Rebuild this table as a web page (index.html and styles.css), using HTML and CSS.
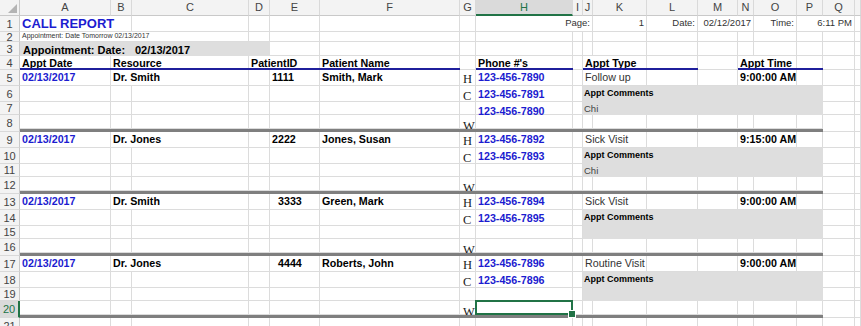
FILE: index.html
```html
<!DOCTYPE html>
<html lang="en">
<head>
<meta charset="utf-8">
<title>Call Report</title>
<link rel="stylesheet" href="styles.css">
</head>
<body>
<div class="sheet">
<div class="corner"><svg width="19" height="15" viewBox="0 0 19 15"><polygon points="17,4 17,13 8,13" fill="#b4b4b4"/></svg></div>
<div class="ch">A</div><div class="ch">B</div><div class="ch">C</div><div class="ch">D</div><div class="ch">E</div><div class="ch">F</div><div class="ch">G</div><div class="ch hsel">H</div><div class="ch">I</div><div class="ch">J</div><div class="ch">K</div><div class="ch">L</div><div class="ch">M</div><div class="ch">N</div><div class="ch">O</div><div class="ch">P</div><div class="ch">Q</div><div class="ch"></div>

<div class="rh">1</div>
<div class="c s2 title">CALL REPORT</div>
<div class="c"></div><div class="c"></div><div class="c"></div><div class="c"></div><div class="c"></div>
<div class="c s3 rt meta">Page:</div>
<div class="c rt meta">1</div>
<div class="c rt meta">Date:</div>
<div class="c s2 rt meta">02/12/2017</div>
<div class="c rt meta">Time:</div>
<div class="c s2 rt meta">6:11 PM</div>
<div class="c"></div>

<div class="rh">2</div>
<div class="c s3 tiny">Appointment: Date Tomorrow 02/13/2017</div>
<div class="c"></div><div class="c"></div><div class="c"></div><div class="c"></div><div class="c"></div><div class="c"></div><div class="c"></div><div class="c"></div><div class="c"></div><div class="c"></div><div class="c"></div><div class="c"></div><div class="c"></div><div class="c"></div><div class="c"></div>

<div class="rh">3</div>
<div class="c s4 band"><span>Appointment: Date:</span><span>02/13/2017</span></div>
<div class="c"></div><div class="c"></div><div class="c"></div><div class="c"></div><div class="c"></div><div class="c"></div><div class="c"></div><div class="c"></div><div class="c"></div><div class="c"></div><div class="c"></div><div class="c"></div><div class="c"></div><div class="c"></div>

<div class="rh">4</div>
<div class="c hd ul">Appt Date</div>
<div class="c s2 hd ul">Resource</div>
<div class="c s2 hd ul">PatientID</div>
<div class="c hd ul">Patient Name</div>
<div class="c"></div>
<div class="c hd ul">Phone #'s</div>
<div class="c"></div>
<div class="c s2 hd ul">Appt Type</div>
<div class="c ul"></div>
<div class="c"></div>
<div class="c s2 hd ul">Appt Time</div>
<div class="c ul"></div>
<div class="c"></div>
<div class="c"></div>

<!-- group 1 -->
<div class="rh">5</div>
<div class="c blue">02/13/2017</div>
<div class="c s2">Dr. Smith</div>
<div class="c"></div>
<div class="c pa">1111</div>
<div class="c">Smith, Mark</div>
<div class="c hl l1">H</div>
<div class="c blue">123-456-7890</div>
<div class="c"></div>
<div class="c s2 ty">Follow up</div>
<div class="c"></div><div class="c"></div>
<div class="c s2">9:00:00 AM</div>
<div class="c"></div><div class="c"></div><div class="c"></div>

<div class="rh">6</div>
<div class="c"></div><div class="c"></div><div class="c"></div><div class="c"></div><div class="c"></div><div class="c"></div>
<div class="c hl l2">C</div>
<div class="c blue p2">123-456-7891</div>
<div class="c"></div>
<div class="c s7 fill"><b>Appt Comments</b><span>Chi</span></div>
<div class="c"></div><div class="c"></div>

<div class="rh">7</div>
<div class="c"></div><div class="c"></div><div class="c"></div><div class="c"></div><div class="c"></div><div class="c"></div>
<div class="c"></div>
<div class="c blue p3">123-456-7890</div>
<div class="c"></div>
<div class="c"></div><div class="c"></div>

<div class="rh r2">8</div>
<div class="c"></div><div class="c"></div><div class="c"></div><div class="c"></div><div class="c"></div><div class="c"></div>
<div class="c hl l4">W</div>
<div class="c"></div><div class="c"></div>
<div class="c"></div><div class="c"></div><div class="c"></div><div class="c"></div><div class="c"></div><div class="c"></div><div class="c"></div>
<div class="c r2"></div><div class="c r2"></div>
<div class="sep"></div>

<!-- group 2 -->
<div class="rh">9</div>
<div class="c blue">02/13/2017</div>
<div class="c s2">Dr. Jones</div>
<div class="c"></div>
<div class="c pa">2222</div>
<div class="c">Jones, Susan</div>
<div class="c hl l1">H</div>
<div class="c blue">123-456-7892</div>
<div class="c"></div>
<div class="c s2 ty">Sick Visit</div>
<div class="c"></div><div class="c"></div>
<div class="c s2">9:15:00 AM</div>
<div class="c"></div><div class="c"></div><div class="c"></div>

<div class="rh">10</div>
<div class="c"></div><div class="c"></div><div class="c"></div><div class="c"></div><div class="c"></div><div class="c"></div>
<div class="c hl l2">C</div>
<div class="c blue p2">123-456-7893</div>
<div class="c"></div>
<div class="c s7 fill"><b>Appt Comments</b><span>Chi</span></div>
<div class="c"></div><div class="c"></div>

<div class="rh">11</div>
<div class="c"></div><div class="c"></div><div class="c"></div><div class="c"></div><div class="c"></div><div class="c"></div>
<div class="c"></div><div class="c"></div><div class="c"></div>
<div class="c"></div><div class="c"></div>

<div class="rh r2">12</div>
<div class="c"></div><div class="c"></div><div class="c"></div><div class="c"></div><div class="c"></div><div class="c"></div>
<div class="c hl l4">W</div>
<div class="c"></div><div class="c"></div>
<div class="c"></div><div class="c"></div><div class="c"></div><div class="c"></div><div class="c"></div><div class="c"></div><div class="c"></div>
<div class="c r2"></div><div class="c r2"></div>
<div class="sep"></div>

<!-- group 3 -->
<div class="rh">13</div>
<div class="c blue">02/13/2017</div>
<div class="c s2">Dr. Smith</div>
<div class="c"></div>
<div class="c pb">3333</div>
<div class="c">Green, Mark</div>
<div class="c hl l1">H</div>
<div class="c blue">123-456-7894</div>
<div class="c"></div>
<div class="c s2 ty">Sick Visit</div>
<div class="c"></div><div class="c"></div>
<div class="c s2">9:00:00 AM</div>
<div class="c"></div><div class="c"></div><div class="c"></div>

<div class="rh">14</div>
<div class="c"></div><div class="c"></div><div class="c"></div><div class="c"></div><div class="c"></div><div class="c"></div>
<div class="c hl l2">C</div>
<div class="c blue p2">123-456-7895</div>
<div class="c"></div>
<div class="c s7 fill"><b>Appt Comments</b></div>
<div class="c"></div><div class="c"></div>

<div class="rh">15</div>
<div class="c"></div><div class="c"></div><div class="c"></div><div class="c"></div><div class="c"></div><div class="c"></div>
<div class="c"></div><div class="c"></div><div class="c"></div>
<div class="c"></div><div class="c"></div>

<div class="rh r2">16</div>
<div class="c"></div><div class="c"></div><div class="c"></div><div class="c"></div><div class="c"></div><div class="c"></div>
<div class="c hl l4">W</div>
<div class="c"></div><div class="c"></div>
<div class="c"></div><div class="c"></div><div class="c"></div><div class="c"></div><div class="c"></div><div class="c"></div><div class="c"></div>
<div class="c r2"></div><div class="c r2"></div>
<div class="sep"></div>

<!-- group 4 -->
<div class="rh">17</div>
<div class="c blue">02/13/2017</div>
<div class="c s2">Dr. Jones</div>
<div class="c"></div>
<div class="c pb">4444</div>
<div class="c">Roberts, John</div>
<div class="c hl l1">H</div>
<div class="c blue">123-456-7896</div>
<div class="c"></div>
<div class="c s2 ty">Routine Visit</div>
<div class="c"></div><div class="c"></div>
<div class="c s2">9:00:00 AM</div>
<div class="c"></div><div class="c"></div><div class="c"></div>

<div class="rh">18</div>
<div class="c"></div><div class="c"></div><div class="c"></div><div class="c"></div><div class="c"></div><div class="c"></div>
<div class="c hl l2">C</div>
<div class="c blue p2">123-456-7896</div>
<div class="c"></div>
<div class="c s7 fill"><b>Appt Comments</b></div>
<div class="c"></div><div class="c"></div>

<div class="rh">19</div>
<div class="c"></div><div class="c"></div><div class="c"></div><div class="c"></div><div class="c"></div><div class="c"></div>
<div class="c"></div><div class="c"></div><div class="c"></div>
<div class="c"></div><div class="c"></div>

<div class="rh r2 rsel">20</div>
<div class="c"></div><div class="c"></div><div class="c"></div><div class="c"></div><div class="c"></div><div class="c"></div>
<div class="c hl l4">W</div>
<div class="c sel"></div><div class="c"></div>
<div class="c"></div><div class="c"></div><div class="c"></div><div class="c"></div><div class="c"></div><div class="c"></div><div class="c"></div>
<div class="c r2"></div><div class="c r2"></div>
<div class="sep"></div>

<div class="rh">21</div>
<div class="c"></div><div class="c"></div><div class="c"></div><div class="c"></div><div class="c"></div><div class="c"></div><div class="c"></div><div class="c"></div><div class="c"></div><div class="c"></div><div class="c"></div><div class="c"></div><div class="c"></div><div class="c"></div><div class="c"></div><div class="c"></div><div class="c"></div><div class="c"></div>
</div>
</body>
</html>
```

FILE: styles.css
```css
* { box-sizing: border-box; margin: 0; padding: 0; }
html, body { background: #fff; }
body {
  width: 861px;
  height: 326px;
  overflow: hidden;
  font-family: "Liberation Sans", Arial, sans-serif;
  color: #000;
}

.sheet {
  display: grid;
  grid-template-columns: 20px 91px 21px 117px 21px 50px 140px 16px 97px 10px 10px 54px 51px 40px 16px 43px 26px 32px 1fr;
  grid-template-rows: 16px 16px 10px 14px 14px repeat(4, 16px 16px 13px 14px 3px) 16px;
}

/* Excel chrome */
.corner {
  display: flex;
  background: #f3f3f3;
  border-right: 1px solid #c9c9c9;
  border-bottom: 1px solid #c9c9c9;
}
.ch {
  background: #f3f3f3;
  border-right: 1px solid #d9d9d9;
  border-bottom: 1px solid #c9c9c9;
  font-size: 11px;
  line-height: 15px;
  color: #444;
  text-align: center;
  overflow: hidden;
}
.ch.hsel {
  background: #dadada;
  color: #217346;
  border-bottom: 2px solid #217346;
  line-height: 14px;
}
.rh {
  display: flex;
  align-items: center;
  justify-content: center;
  background: #f3f3f3;
  border-right: 1px solid #c9c9c9;
  border-bottom: 1px solid #d9d9d9;
  font-size: 11px;
  color: #444;
}
.rh.rsel {
  background: #dadada;
  color: #217346;
  border-right: 2px solid #217346;
}

/* cells */
.c {
  display: flex;
  align-items: flex-end;
  min-width: 0;
  padding: 0 2px 2px;
  border-right: 1px solid #dcdcdc;
  border-bottom: 1px solid #dcdcdc;
  white-space: nowrap;
  font-size: 10.7px;
  font-weight: bold;
}
.s2 { grid-column: span 2; }
.s3 { grid-column: span 3; }
.s4 { grid-column: span 4; }
.s7 { grid-column: span 7; }
.r2 { grid-row: span 2; }
.rt { justify-content: flex-end; }

.title { font-size: 13px; color: #1c1cd0; padding-bottom: 0; }
.meta { font-size: 9.5px; font-weight: normal; color: #333; padding-bottom: 3px; }
.tiny { font-size: 7px; font-weight: normal; color: #333; }

.band {
  display: grid;
  grid-template-columns: 112px 1fr;
  align-items: end;
  padding: 0;
  background: #dedede;
  border-color: #dedede;
  font-size: 11px;
  line-height: 10px;
}
.band span { padding-left: 3px; }

.hd { padding-bottom: 0; }
.ul { position: relative; }
.ul::after {
  content: "";
  position: absolute;
  left: 0;
  right: -1px;
  bottom: -1px;
  height: 2px;
  background: #1f1f9c;
}

.blue { color: #1c1cd0; }
.ty { font-weight: normal; color: #333; }
.pa { padding-left: 2px; }
.pb { padding-left: 8px; }
.p2 { padding-bottom: 1px; }
.p3 { padding-bottom: 0; line-height: 6px; }

.hl {
  padding: 0 0 0 3px;
  font-family: "Liberation Serif", "Times New Roman", serif;
  font-size: 12.5px;
  font-weight: normal;
  color: #222;
}
.l1 { line-height: 12px; }
.l2 { line-height: 10px; }
.l4 { line-height: 4px; }

.fill {
  grid-row: span 2;
  flex-direction: column;
  align-items: flex-start;
  justify-content: flex-start;
  padding: 1px 2px 0 1px;
  background: #dedede;
  border-color: #dedede;
}
.fill b { font-size: 9px; line-height: 12px; }
.fill span {
  margin-top: 4px;
  font-size: 9.5px;
  line-height: 12px;
  font-weight: normal;
  color: #444;
}

.sep { grid-column: span 16; background: #7f7f7f; }

.sel { position: relative; z-index: 2; }
.sel::after {
  content: "";
  position: absolute;
  left: -1px;
  top: -1px;
  right: -1px;
  bottom: -1px;
  border: 2px solid #217346;
}
.sel::before {
  content: "";
  position: absolute;
  right: -4px;
  bottom: -4px;
  width: 6px;
  height: 6px;
  background: #217346;
  border: 1px solid #fff;
  z-index: 1;
}
```
